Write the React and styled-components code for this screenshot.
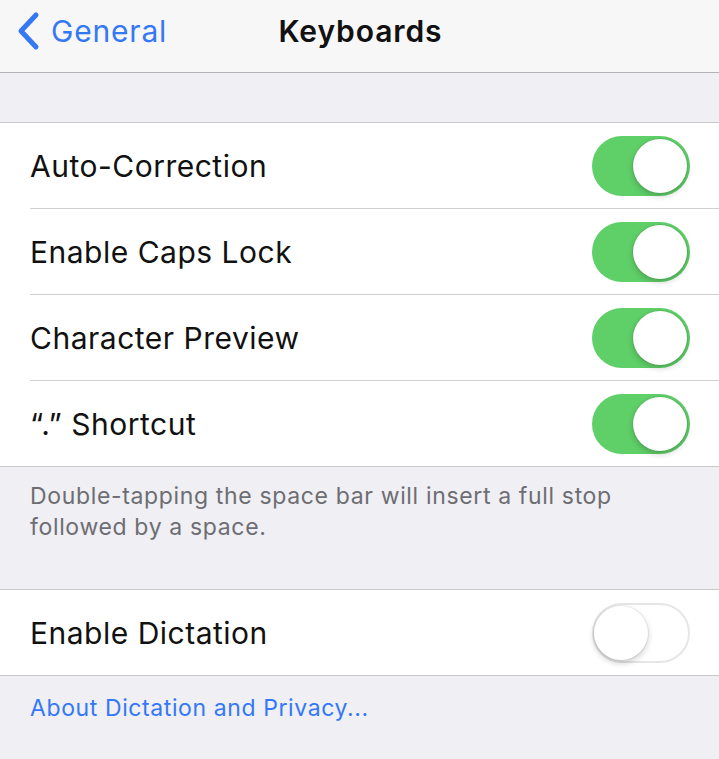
import React, { useState } from 'react'
import styled, { createGlobalStyle } from 'styled-components'

const Global = createGlobalStyle`
  html, body { margin: 0; padding: 0; background: #efeff4; }
  body { font-family: Inter, "Liberation Sans", sans-serif; -webkit-font-smoothing: antialiased; }
`

const Page = styled.div`
  width: 719px;
  min-height: 759px;
  background: #efeff4;
  overflow: hidden;
`

const NavBar = styled.div`
  height: 73px;
  box-sizing: border-box;
  padding-bottom: 10px;
  background: #f7f7f8;
  border-bottom: 1px solid #b4b4b8;
  display: grid;
  grid-template-columns: 1fr auto 1fr;
  align-items: center;
`

const Back = styled.div`
  display: flex;
  align-items: center;
  gap: 10px;
  padding-left: 15px;
  color: #3478f6;
  font-size: 30px;
  letter-spacing: 0.8px;
`

const Title = styled.div`
  font-size: 30px;
  font-weight: 600;
  color: #111;
  letter-spacing: 0.9px;
  transform: translateX(1px);
`

const Spacer = styled.div`
  height: ${p => p.h}px;
`

const Group = styled.div`
  background: #fff;
  border-top: 1px solid #c8c7cc;
  border-bottom: 1px solid #c8c7cc;
`

const Row = styled.div`
  height: 86px;
  box-sizing: border-box;
  display: flex;
  align-items: center;
  justify-content: space-between;
  padding: 0 29px 0 30px;
  & + & { border-top: 1px solid #d0d0d4; margin-left: 30px; padding-left: 0; height: 86px; }
  &:first-child { height: 85px; }
`

const Label = styled.div`
  font-size: 30px;
  color: #111;
  letter-spacing: 0.5px;
`

const Footer = styled.div`
  padding: 14px 70px 0 30px;
  font-size: 23px;
  line-height: 31px;
  color: #6d6d72;
  letter-spacing: 0.65px;
  height: ${p => p.h}px;
  box-sizing: border-box;
`

const Link = styled.div`
  padding: 17px 30px 0;
  font-size: 23px;
  line-height: 31px;
  color: #3478f6;
  letter-spacing: 0.6px;
`

const Track = styled.div`
  width: 98px;
  height: 60px;
  border-radius: 30px;
  box-sizing: border-box;
  position: relative;
  background: ${p => (p.on ? '#5fcf68' : '#fff')};
  border: ${p => (p.on ? 'none' : '2px solid #e6e6e8')};
  cursor: pointer;
`

const Knob = styled.div`
  width: 54px;
  height: 54px;
  border-radius: 50%;
  background: #fff;
  position: absolute;
  top: ${p => (p.on ? 3 : 1)}px;
  left: ${p => (p.on ? 41 : 0)}px;
  box-shadow: 0 3px 6px rgba(0, 0, 0, 0.2), 0 0 0 1px rgba(0, 0, 0, 0.06);
`

const Toggle = ({ on, onClick }) => (
  <Track on={on} onClick={onClick}>
    <Knob on={on} />
  </Track>
)

const Chevron = () => (
  <svg width="26" height="40" viewBox="0 0 26 40">
    <path d="M21 4 L6 20 L21 36" fill="none" stroke="#3478f6" strokeWidth="5" strokeLinecap="round" strokeLinejoin="round" />
  </svg>
)

export default function App() {
  const [s, setS] = useState({ auto: true, caps: true, preview: true, shortcut: true, dictation: false })
  const flip = k => () => setS(v => ({ ...v, [k]: !v[k] }))
  return (
    <Page>
      <Global />
      <NavBar>
        <Back><Chevron />General</Back>
        <Title>Keyboards</Title>
        <div />
      </NavBar>
      <Spacer h={49} />
      <Group>
        <Row><Label>Auto-Correction</Label><Toggle on={s.auto} onClick={flip('auto')} /></Row>
        <Row><Label>Enable Caps Lock</Label><Toggle on={s.caps} onClick={flip('caps')} /></Row>
        <Row><Label>Character Preview</Label><Toggle on={s.preview} onClick={flip('preview')} /></Row>
        <Row><Label>“.” Shortcut</Label><Toggle on={s.shortcut} onClick={flip('shortcut')} /></Row>
      </Group>
      <Footer h={122}>
        Double-tapping the space bar will insert a full stop followed by a space.
      </Footer>
      <Group>
        <Row><Label>Enable Dictation</Label><Toggle on={s.dictation} onClick={flip('dictation')} /></Row>
      </Group>
      <Link>About Dictation and Privacy...</Link>
    </Page>
  )
}
